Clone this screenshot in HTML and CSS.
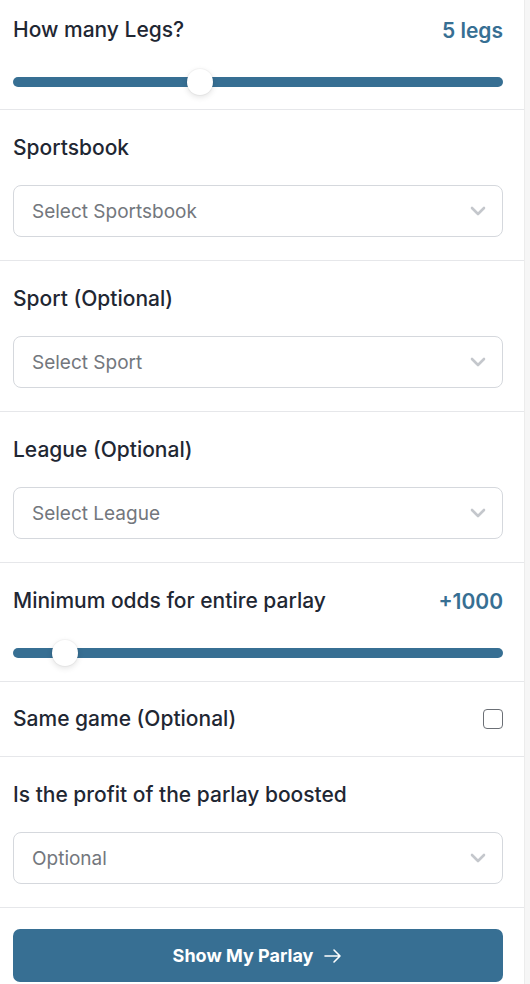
FILE: index.html
```html
<!DOCTYPE html>
<html lang="en">
<head>
    <meta charset="UTF-8">
    <meta name="viewport" content="width=device-width, initial-scale=1.0">
    <title>Parlay Builder</title>
    <link rel="stylesheet" href="styles.css">
</head>
<body>
    <div class="page">
        <form class="panel" onsubmit="return false">
            <div class="section">
                <div class="row">
                    <label for="legs">How many Legs?</label>
                    <span class="value" id="legs-value">5 legs</span>
                </div>
                <input type="range" class="slider" id="legs" min="2" max="10" value="5">
            </div>

            <div class="section">
                <label class="title">Sportsbook</label>
                <div class="select">
                    <span>Select Sportsbook</span>
                    <svg width="16" height="10" viewBox="0 0 16 10"><path d="M2 2l6 6 6-6" fill="none" stroke="#c4c7cc" stroke-width="2.6" stroke-linecap="round" stroke-linejoin="round"/></svg>
                </div>
            </div>

            <div class="section">
                <label class="title">Sport (Optional)</label>
                <div class="select">
                    <span>Select Sport</span>
                    <svg width="16" height="10" viewBox="0 0 16 10"><path d="M2 2l6 6 6-6" fill="none" stroke="#c4c7cc" stroke-width="2.6" stroke-linecap="round" stroke-linejoin="round"/></svg>
                </div>
            </div>

            <div class="section">
                <label class="title">League (Optional)</label>
                <div class="select">
                    <span>Select League</span>
                    <svg width="16" height="10" viewBox="0 0 16 10"><path d="M2 2l6 6 6-6" fill="none" stroke="#c4c7cc" stroke-width="2.6" stroke-linecap="round" stroke-linejoin="round"/></svg>
                </div>
            </div>

            <div class="section">
                <div class="row">
                    <label for="odds">Minimum odds for entire parlay</label>
                    <span class="value" id="odds-value">+1000</span>
                </div>
                <input type="range" class="slider" id="odds" min="0" max="12000" step="100" value="1000">
            </div>

            <div class="section compact">
                <div class="row">
                    <label for="same">Same game (Optional)</label>
                    <input type="checkbox" id="same" class="check">
                </div>
            </div>

            <div class="section">
                <label class="title">Is the profit of the parlay boosted</label>
                <div class="select">
                    <span>Optional</span>
                    <svg width="16" height="10" viewBox="0 0 16 10"><path d="M2 2l6 6 6-6" fill="none" stroke="#c4c7cc" stroke-width="2.6" stroke-linecap="round" stroke-linejoin="round"/></svg>
                </div>
            </div>

            <div class="section last">
                <button class="submit" type="submit">
                    Show My Parlay
                    <svg width="20" height="16" viewBox="0 0 20 16"><path d="M2 8h15M11 2l6 6-6 6" fill="none" stroke="#fff" stroke-width="1.6" stroke-linecap="round" stroke-linejoin="round"/></svg>
                </button>
            </div>
        </form>
        <div class="scrollbar"></div>
    </div>

    <script>
        const legs = document.getElementById('legs');
        const odds = document.getElementById('odds');

        legs.addEventListener('input', () => {
            document.getElementById('legs-value').textContent = legs.value + ' legs';
        });
        odds.addEventListener('input', () => {
            document.getElementById('odds-value').textContent = '+' + odds.value;
        });
    </script>
</body>
</html>
```

FILE: styles.css
```css
body {
    margin: 0;
    font-family: Inter, "Noto Sans", sans-serif;
    color: #1f2733;
    background: #fff;
}
.page {
    display: flex;
    min-height: 984px;
}
.panel {
    width: 525px;
    border-right: 1px solid #ececec;
    box-sizing: border-box;
    margin: 0;
}
.scrollbar {
    flex: 1;
    background: #f6f6f6;
}
.section {
    padding: 23px 21px 23px 13px;
    border-bottom: 1px solid #e6e7ea;
}
.section:first-child {
    padding-top: 15px;
    padding-bottom: 22px;
}
.section.compact {
    padding-top: 22px;
    padding-bottom: 22px;
}
.section.last {
    border-bottom: none;
    padding-top: 21px;
}
.row {
    display: flex;
    justify-content: space-between;
    align-items: center;
    height: 30px;
}
label {
    font-size: 21px;
    font-weight: 500;
    line-height: 30px;
}
.title {
    display: block;
    margin-bottom: 22px;
}
.value {
    color: #376f93;
    font-size: 21px;
    font-weight: 600;
}
.slider {
    -webkit-appearance: none;
    appearance: none;
    display: block;
    width: 100%;
    height: 10px;
    margin: 32px 0 0;
    border-radius: 5px;
    background: #376f93;
    outline: none;
}
.slider::-webkit-slider-thumb {
    -webkit-appearance: none;
    appearance: none;
    width: 26px;
    height: 26px;
    border-radius: 50%;
    background: #fff;
    box-shadow: 0 2px 6px rgba(0,0,0,0.12), 0 0 0 1px rgba(0,0,0,0.03);
    cursor: pointer;
}
.select {
    display: flex;
    justify-content: space-between;
    align-items: center;
    height: 52px;
    box-sizing: border-box;
    padding: 0 16px 0 18px;
    border: 1px solid #d5d8dd;
    border-radius: 8px;
    font-size: 19px;
    color: #73777d;
}
.check {
    -webkit-appearance: none;
    appearance: none;
    width: 20px;
    height: 20px;
    margin: 0;
    border: 1.5px solid #6b6f75;
    border-radius: 4px;
    background: #fff;
}
.submit {
    display: flex;
    justify-content: center;
    align-items: center;
    gap: 10px;
    width: 100%;
    height: 53px;
    border: none;
    border-radius: 7px;
    background: #376f93;
    color: #fff;
    font-family: Inter, "Noto Sans", sans-serif;
    font-size: 18px;
    font-weight: 700;
    cursor: pointer;
}
```
